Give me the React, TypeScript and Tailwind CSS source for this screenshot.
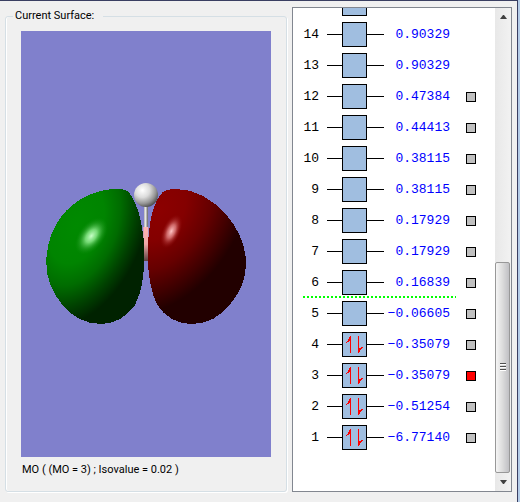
import React, { useState } from 'react';

type Level = {
  id: number;
  energy: string;
  electrons?: number;
  selectable?: boolean;
};

// Highest orbital first, the list is scrolled to the bottom
const levels: Level[] = [
  { id: 14, energy: '0.90329' },
  { id: 13, energy: '0.90329' },
  { id: 12, energy: '0.47384', selectable: true },
  { id: 11, energy: '0.44413', selectable: true },
  { id: 10, energy: '0.38115', selectable: true },
  { id: 9, energy: '0.38115', selectable: true },
  { id: 8, energy: '0.17929', selectable: true },
  { id: 7, energy: '0.17929', selectable: true },
  { id: 6, energy: '0.16839', selectable: true },
  { id: 5, energy: '−0.06605', selectable: true },
  { id: 4, energy: '−0.35079', electrons: 2, selectable: true },
  { id: 3, energy: '−0.35079', electrons: 2, selectable: true },
  { id: 2, energy: '−0.51254', electrons: 2, selectable: true },
  { id: 1, energy: '−6.77140', electrons: 2, selectable: true },
];

function SpinPair() {
  return (
    <svg viewBox="0 0 23 23" className="h-[23px] w-[23px]" fill="#ff0000" shapeRendering="crispEdges" aria-hidden="true">
      <path d="M7 3h1v17h-1zM8 3v4h-1v1h-1v1h-2v1h-1v-1h1v-1h1v-2h1v-2h1v-1z" />
      <path d="M15 3h1v17h-1zM15 20v-6h1v1h2v-1h2v1h-1v1h-1v1h-1v2h-1v1z" />
    </svg>
  );
}

function Orbital() {
  return (
    <svg
      viewBox="-27 -417 750 1278"
      preserveAspectRatio="xMidYMid slice"
      className="min-h-0 w-full flex-1 bg-[#8080cc]"
      role="img"
      aria-label="Molecular orbital surface"
    >
      <defs>
        <radialGradient id="green" gradientUnits="userSpaceOnUse" cx="0" cy="0" r="1" gradientTransform="translate(140 165) rotate(21) scale(220 345)">
          <stop offset="0" stopColor="#008a00" />
          <stop offset="0.35" stopColor="#008400" />
          <stop offset="0.55" stopColor="#006c00" />
          <stop offset="0.75" stopColor="#004200" />
          <stop offset="0.92" stopColor="#002200" />
        </radialGradient>
        <radialGradient id="red" gradientUnits="userSpaceOnUse" cx="0" cy="0" r="1" gradientTransform="translate(390 120) rotate(32) scale(275 390)">
          <stop offset="0" stopColor="#8c0000" />
          <stop offset="0.25" stopColor="#840000" />
          <stop offset="0.5" stopColor="#660000" />
          <stop offset="0.7" stopColor="#420000" />
          <stop offset="0.87" stopColor="#220000" />
        </radialGradient>
        <radialGradient id="greenShine">
          <stop offset="0" stopColor="#c8ffc8" />
          <stop offset="0.35" stopColor="#88e888" stopOpacity="0.85" />
          <stop offset="0.7" stopColor="#40b040" stopOpacity="0.4" />
          <stop offset="1" stopColor="#109010" stopOpacity="0" />
        </radialGradient>
        <radialGradient id="redShine">
          <stop offset="0" stopColor="#ffc4c4" />
          <stop offset="0.4" stopColor="#e08080" stopOpacity="0.8" />
          <stop offset="0.7" stopColor="#b84040" stopOpacity="0.4" />
          <stop offset="1" stopColor="#901010" stopOpacity="0" />
        </radialGradient>
        <radialGradient id="atom" cx="0.35" cy="0.3" r="0.75">
          <stop offset="0" stopColor="#ffffff" />
          <stop offset="0.4" stopColor="#dcdcdc" />
          <stop offset="0.75" stopColor="#949494" />
          <stop offset="1" stopColor="#484848" />
        </radialGradient>
        <linearGradient id="bond">
          <stop offset="0" stopColor="#b0b0b0" />
          <stop offset="0.4" stopColor="#e8e8e8" />
          <stop offset="1" stopColor="#606060" />
        </linearGradient>
        <linearGradient id="boron" x2="0" y2="1">
          <stop offset="0" stopColor="#ffb4b4" />
          <stop offset="0.5" stopColor="#f0a8a8" />
          <stop offset="1" stopColor="#5c4040" />
        </linearGradient>
      </defs>
      <rect x="342" y="105" width="12" height="68" fill="url(#bond)" />
      <rect x="340" y="171" width="15" height="102" fill="url(#boron)" />
      <g shapeRendering="crispEdges">
        <path
          fill="url(#green)"
          d="M262 57C277 57 291 59 299 70C314 90 325 120 333 155C340 185 343 220 343 255C343 320 335 365 315 405C290 440 255 462 213 462C165 462 128 440 98 406C65 365 49 325 49 278C49 225 65 180 92 142C130 90 195 57 262 57Z"
        />
        <path
          fill="url(#red)"
          d="M440 57C420 57 405 60 398 66C377 88 368 120 361 155C355 185 354 220 354 255C354 320 362 365 382 405C405 440 440 462 484 462C533 462 570 440 600 404C633 362 648 325 648 280C648 225 625 178 590 135C545 84 490 57 440 57Z"
        />
      </g>
      <ellipse cx="184" cy="198" rx="64" ry="38" transform="rotate(-52 184 198)" fill="url(#greenShine)" />
      <ellipse cx="424" cy="184" rx="54" ry="27" transform="rotate(-66 424 184)" fill="url(#redShine)" />
      <circle cx="348" cy="75" r="36" fill="url(#atom)" />
    </svg>
  );
}

type LevelRowProps = {
  level: Level;
  checked: boolean;
  onToggle: () => void;
};

function LevelRow({ level, checked, onToggle }: LevelRowProps) {
  return (
    <li className="flex h-[31px] shrink-0 items-center">
      <label htmlFor={`mo-${level.id}`} className="flex items-center">
        <span className="w-[26px] text-right">{level.id}</span>
        <span className="ml-2 h-px w-[15px] bg-black" />
        <span className="h-[25px] w-[25px] border border-black bg-[#a0bee0]">
          {level.electrons === 2 && <SpinPair />}
        </span>
        <span className="h-px w-[17px] bg-black" />
        <span className="w-[66px] text-right text-[#0000ff]">{level.energy}</span>
      </label>
      {level.selectable && (
        <input
          id={`mo-${level.id}`}
          type="checkbox"
          checked={checked}
          onChange={onToggle}
          className="ml-4 h-[10px] w-[10px] appearance-none border border-black bg-[#c0c0c0] checked:bg-[#ff0000]"
        />
      )}
    </li>
  );
}

function ScrollBar() {
  return (
    <div className="flex w-4 shrink-0 flex-col bg-gradient-to-r from-[#e8e8e8] to-[#f2f2f2]">
      <button type="button" aria-label="Scroll up" className="flex h-[17px] items-center justify-center">
        <svg viewBox="0 0 7 4" className="h-1 w-[7px]" fill="#404040" aria-hidden="true">
          <path d="M3 0h1l3 4h-7z" />
        </svg>
      </button>
      <div className="grow-[238] basis-0" />
      <div className="mr-px flex grow-[210] basis-0 flex-col items-center justify-center gap-px rounded-xs border border-[#989898] bg-gradient-to-r from-[#f5f5f5] via-[#dcdcdc] to-[#c0c0c4]">
        <span className="h-0.5 w-[6px] border-t border-[#505050] bg-white" />
        <span className="h-0.5 w-[6px] border-t border-[#505050] bg-white" />
        <span className="h-0.5 w-[6px] border-t border-[#505050] bg-white" />
      </div>
      <button type="button" aria-label="Scroll down" className="flex h-[18px] items-center justify-center">
        <svg viewBox="0 0 7 4" className="h-1 w-[7px]" fill="#404040" aria-hidden="true">
          <path d="M0 0h7l-3 4h-1z" />
        </svg>
      </button>
    </div>
  );
}

export default function App() {
  const [selected, setSelected] = useState<number | null>(3);

  return (
    <div className="h-screen bg-[#b4cce8] pr-0.5 font-[Roboto,'Liberation_Sans',sans-serif] text-[11px] text-black">
      <main className="flex h-full gap-[5px] border-t border-r border-[#3a3f62] bg-[#f0f0f0] pr-[5px] pb-[10px] pl-[5px]">
        {/* Surface preview */}
        <fieldset className="mt-[9px] flex min-w-0 flex-1 flex-col rounded-[3px] border border-[#d5dfe5] px-[15px] pt-[9px] shadow-[inset_1px_0_0_#fff,1px_1px_0_#fff]">
          <legend className="-ml-2 pr-[9px] pl-0.5 leading-3">Current Surface:</legend>
          <Orbital />
          <p className="pt-[5px] pb-[13px] pl-px leading-4">MO ( (MO = 3) ; Isovalue = 0.02 )</p>
        </fieldset>

        {/* Energy level diagram */}
        <section className="mt-[6px] flex w-[220px] border border-[#828790] bg-white">
          <ul className="flex min-w-0 flex-1 flex-col justify-end overflow-hidden pb-[38px] font-['Liberation_Mono','Courier_New',monospace] text-[13px] leading-4">
            {/* Bottom edge of the next level up */}
            <li aria-hidden="true" className="flex h-[31px] shrink-0 items-center pl-[49px]">
              <span className="h-[25px] w-[25px] border border-black bg-[#a0bee0]" />
            </li>
            {levels.map((level) => (
              <React.Fragment key={level.id}>
                <LevelRow
                  level={level}
                  checked={selected === level.id}
                  onToggle={() => setSelected(selected === level.id ? null : level.id)}
                />
                {level.id === 6 && (
                  <li
                    aria-hidden="true"
                    className="-mt-0.5 mr-[39px] ml-[10px] h-0.5 shrink-0 bg-[repeating-linear-gradient(90deg,#00ff00_0_2px,transparent_2px_4px)]"
                  />
                )}
              </React.Fragment>
            ))}
          </ul>
          <ScrollBar />
        </section>
      </main>
    </div>
  );
}
